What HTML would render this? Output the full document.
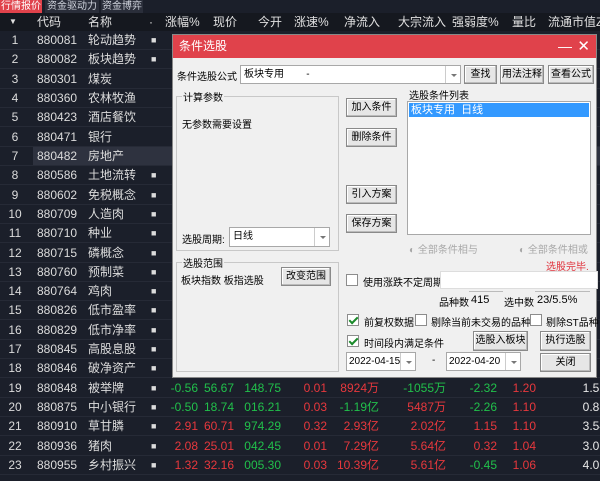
<!DOCTYPE html>
<html><head><meta charset="utf-8"><style>
*{margin:0;padding:0;box-sizing:border-box}
body{width:600px;height:481px;overflow:hidden;background:#1b1f2a;font-family:"Liberation Sans","Noto Sans CJK SC",sans-serif;font-size:12px;color:#dcdcdc;position:relative}
.a{position:absolute;white-space:nowrap}
.tab{top:0;height:13px;font-size:10px;line-height:13px;color:#cfd3dc;background:#2a2e3a;text-align:center;overflow:hidden}
.hdr{position:absolute;left:0;top:13px;width:600px;height:18px;background:#15181f}
.row{position:absolute;left:0;width:600px;height:19px;border-bottom:1px solid #262a36;font-size:12px;line-height:19px;overflow:hidden}
.g{color:#21c04b}.r{color:#e8383d}.w{color:#e8e8e8}
.dlg{position:absolute;left:172px;top:34px;width:425px;height:344px;background:#f0f0f0;border:1px solid #888;color:#000;font-size:10px}
.tt{position:absolute;left:0;top:0;width:100%;height:23px;background:#e0424b;color:#fff;font-size:12px;line-height:23px;padding-left:6px}
.btn{position:absolute;background:#e6e6e6;border:1px solid #8a8a8a;box-shadow:inset -1px -1px 0 #bbb,inset 1px 1px 0 #fff;text-align:center;font-size:10px;line-height:17px;color:#000;white-space:nowrap;overflow:hidden}
.box{position:absolute;background:#fff;border:1px solid #a8a8a8;white-space:nowrap;overflow:hidden}
.grp{position:absolute;border:1px solid #c8c8c8}
.gl{position:absolute;top:-8px;left:5px;background:#f0f0f0;padding:0 1px;white-space:nowrap}
.cb{position:absolute;width:12px;height:12px;border:1px solid #8c8c8c;background:#fff}
.ck::after{content:"";position:absolute;left:3px;top:0px;width:3px;height:7px;border:solid #1a8a2a;border-width:0 2px 2px 0;transform:rotate(45deg)}
.dd{position:absolute;right:0;top:0;bottom:0;width:15px;border-left:1px solid #ccc;background:#fff}
.dd::after{content:"";position:absolute;left:5px;top:8px;border:3px solid transparent;border-top:3px solid #777}
</style></head><body>
<div class="a tab" style="left:0;width:42px;background:#e0424b;color:#fff">行情报价</div>
<div class="a tab" style="left:45px;width:54px">资金驱动力</div>
<div class="a tab" style="left:101px;width:42px">资金博弈</div>
<div class="hdr"></div>
<div class="a" style="top:13px;left:0;width:600px;height:18px;line-height:18px;font-size:12px;color:#e0e0e0">
<span class="a" style="left:9px;font-size:8px">▼</span><span class="a" style="left:37px">代码</span><span class="a" style="left:88px">名称</span><span class="a" style="left:149px">·</span><span class="a" style="left:165px">涨幅%</span><span class="a" style="left:213px">现价</span><span class="a" style="left:258px">今开</span><span class="a" style="left:294px">涨速%</span><span class="a" style="left:344px">净流入</span><span class="a" style="left:398px">大宗流入</span><span class="a" style="left:452px">强弱度%</span><span class="a" style="left:512px">量比</span><span class="a" style="left:548px">流通市值Z</span></div>
<div id="rows"></div>
<script>
var d=[["880081","轮动趋势",1],["880082","板块趋势",1],["880301","煤炭"],["880360","农林牧渔"],["880423","酒店餐饮"],["880471","银行"],["880482","房地产"],["880586","土地流转",1],["880602","免税概念",1],["880709","人造肉",1],["880710","种业",1],["880715","磷概念",1],["880760","预制菜",1],["880764","鸡肉",1],["880826","低市盈率",1],["880829","低市净率",1],["880845","高股息股",1],["880846","破净资产",1],
["880848","被举牌",1,[["g","-0.56"],["g","56.67"],["g","148.75"],["r","0.01"],["r","8924万"],["g","-1055万"],["g","-2.32"],["r","1.20"],["w","1.52"]]],
["880875","中小银行",1,[["g","-0.50"],["g","18.74"],["g","016.21"],["r","0.03"],["g","-1.19亿"],["r","5487万"],["g","-2.26"],["r","1.10"],["w","0.88"]]],
["880910","草甘膦",1,[["r","2.91"],["r","60.71"],["g","974.29"],["r","0.32"],["r","2.93亿"],["r","2.02亿"],["r","1.15"],["r","1.10"],["w","3.54"]]],
["880936","猪肉",1,[["r","2.08"],["r","25.01"],["g","042.45"],["r","0.01"],["r","7.29亿"],["r","5.64亿"],["r","0.32"],["r","1.04"],["w","3.06"]]],
["880955","乡村振兴",1,[["r","1.32"],["r","32.16"],["g","005.30"],["r","0.03"],["r","10.39亿"],["r","5.61亿"],["g","-0.45"],["r","1.06"],["w","4.06"]]]];
var R=[198,234,281,327,379,446,497,536,606];var h="";
for(var i=0;i<d.length;i++){var t=31+i*19.32;var bg=i==6?"background:linear-gradient(90deg,#1b1f2a 33px,#2e323f 33px)":"";
h+='<div class="row" style="top:'+t+'px;'+bg+'"><span class="a" style="left:0;width:30px;text-align:center">'+(i+1)+'</span><span class="a" style="left:37px">'+d[i][0]+'</span><span class="a" style="left:88px">'+d[i][1]+'</span>'+(d[i][2]?'<span class="a" style="left:151px;font-size:9px">■</span>':'');
if(d[i][3])for(var j=0;j<9;j++)h+='<span class="a '+d[i][3][j][0]+'" style="right:'+(600-R[j])+'px">'+d[i][3][j][1]+'</span>';
h+='</div>';}
document.getElementById("rows").innerHTML=h;
</script>
<div class="dlg">
<div class="tt">条件选股<span class="a" style="right:24px;top:0;font-size:14px">—</span><span class="a" style="right:6px;top:0;font-size:15px">✕</span></div>
<div class="a" style="left:4px;top:33px">条件选股公式</div>
<div class="box" style="left:67px;top:30px;width:221px;height:19px;line-height:17px;padding-left:3px">板块专用&nbsp;&nbsp;&nbsp;&nbsp;&nbsp;&nbsp;&nbsp;&nbsp;-<div class="dd"></div></div>
<div class="btn" style="left:291px;top:30px;width:33px;height:19px">查找</div>
<div class="btn" style="left:327px;top:30px;width:44px;height:19px">用法注释</div>
<div class="btn" style="left:375px;top:30px;width:46px;height:19px">查看公式</div>
<div class="grp" style="left:3px;top:61px;width:163px;height:155px"><span class="gl">计算参数</span>
<span class="a" style="left:5px;top:19px">无参数需要设置</span>
<span class="a" style="left:5px;top:134px">选股周期:</span>
<div class="box" style="left:52px;top:130px;width:101px;height:20px;line-height:18px;padding-left:3px">日线<div class="dd"></div></div></div>
<div class="btn" style="left:173px;top:63px;width:51px;height:19px">加入条件</div>
<div class="btn" style="left:173px;top:93px;width:51px;height:19px">删除条件</div>
<div class="btn" style="left:173px;top:150px;width:51px;height:19px">引入方案</div>
<div class="btn" style="left:173px;top:179px;width:51px;height:19px">保存方案</div>
<div class="a" style="left:236px;top:52px">选股条件列表</div>
<div class="box" style="left:234px;top:66px;width:184px;height:134px"><div style="margin:1px;height:14px;background:#3399ff;color:#fff;line-height:14px;padding-left:2px;font-size:11px">板块专用&nbsp;&nbsp;日线</div></div>
<div class="a" style="left:236px;top:206px;color:#a8a8a8">◐ 全部条件相与</div>
<div class="a" style="left:346px;top:206px;color:#a8a8a8">◐ 全部条件相或</div>
<div class="a" style="left:373px;top:223px;color:#e0303a">选股完毕.</div>
<div class="grp" style="left:3px;top:227px;width:163px;height:110px"><span class="gl">选股范围</span>
<span class="a" style="left:4px;top:9px">板块指数 板指选股</span>
<div class="btn" style="left:104px;top:4px;width:50px;height:19px">改变范围</div></div>
<div class="cb" style="left:173px;top:239px"></div><span class="a" style="left:190px;top:239px">使用涨跌不定周期</span>
<div class="box" style="left:267px;top:236px;width:158px;height:18px;border-color:#ddd"></div>
<span class="a" style="left:266px;top:259px">品种数</span><div class="a" style="left:296px;top:256px;width:34px;height:16px;border-top:1px solid #bbb;line-height:16px;padding-left:2px;font-size:11px">415</div>
<span class="a" style="left:331px;top:259px">选中数</span><div class="a" style="left:362px;top:256px;width:55px;height:16px;border-top:1px solid #bbb;line-height:16px;padding-left:2px;font-size:11px">23/5.5%</div>
<div class="cb ck" style="left:174px;top:279px"></div><span class="a" style="left:191px;top:279px">前复权数据</span>
<div class="cb" style="left:242px;top:279px"></div><span class="a" style="left:258px;top:279px">剔除当前未交易的品种</span>
<div class="cb" style="left:357px;top:279px"></div><span class="a" style="left:373px;top:279px">剔除ST品种</span>
<div class="cb ck" style="left:174px;top:300px"></div><span class="a" style="left:191px;top:300px">时间段内满足条件</span>
<div class="btn" style="left:300px;top:296px;width:55px;height:20px;line-height:18px">选股入板块</div>
<div class="btn" style="left:367px;top:296px;width:51px;height:20px;line-height:18px">执行选股</div>
<div class="box" style="left:173px;top:317px;width:70px;height:19px;line-height:17px;padding-left:2px;font-size:10px">2022-04-15<div class="dd"></div></div>
<span class="a" style="left:259px;top:320px">-</span>
<div class="box" style="left:273px;top:317px;width:75px;height:19px;line-height:17px;padding-left:2px;font-size:10px">2022-04-20<div class="dd"></div></div>
<div class="btn" style="left:367px;top:318px;width:51px;height:19px">关闭</div>
</div>
</body></html>
